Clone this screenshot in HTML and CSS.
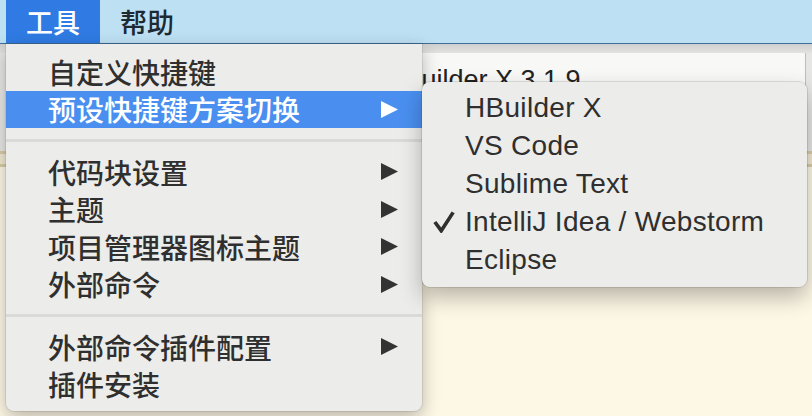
FILE: index.html
```html
<!DOCTYPE html>
<html lang="zh-CN">
<head>
<meta charset="utf-8">
<title>工具菜单</title>
<link rel="stylesheet" href="styles.css">
</head>
<body>
<div class="menubar">
  <div class="mb-item active">工具</div>
  <div class="mb-item">帮助</div>
</div>
<div class="workspace">
  <div class="tabstrip"></div>
  <div class="header">
    <div class="left-gutter"></div>
    <div class="title">HBuilder X 3.1.9</div>
  </div>
  <div class="rules"></div>
  <div class="paper"></div>

  <div class="menu main-menu">
    <div class="row"><span class="label">自定义快捷键</span></div>
    <div class="row hl"><span class="label">预设快捷键方案切换</span><svg class="arrow" viewBox="0 0 17 17"><polygon points="0,0 17,8.5 0,17"/></svg></div>
    <div class="sep"></div>
    <div class="row"><span class="label">代码块设置</span><svg class="arrow" viewBox="0 0 17 17"><polygon points="0,0 17,8.5 0,17"/></svg></div>
    <div class="row"><span class="label">主题</span><svg class="arrow" viewBox="0 0 17 17"><polygon points="0,0 17,8.5 0,17"/></svg></div>
    <div class="row"><span class="label">项目管理器图标主题</span><svg class="arrow" viewBox="0 0 17 17"><polygon points="0,0 17,8.5 0,17"/></svg></div>
    <div class="row"><span class="label">外部命令</span><svg class="arrow" viewBox="0 0 17 17"><polygon points="0,0 17,8.5 0,17"/></svg></div>
    <div class="sep"></div>
    <div class="row"><span class="label">外部命令插件配置</span><svg class="arrow" viewBox="0 0 17 17"><polygon points="0,0 17,8.5 0,17"/></svg></div>
    <div class="row"><span class="label">插件安装</span></div>
  </div>

  <div class="menu sub-menu">
    <div class="srow"><span class="check"></span><span class="label">HBuilder X</span></div>
    <div class="srow"><span class="check"></span><span class="label">VS Code</span></div>
    <div class="srow"><span class="check"></span><span class="label">Sublime Text</span></div>
    <div class="srow"><span class="check"><svg viewBox="0 0 24 24"><polyline points="2,12 9,21.5 22,1.5"/></svg></span><span class="label">IntelliJ Idea / Webstorm</span></div>
    <div class="srow"><span class="check"></span><span class="label">Eclipse</span></div>
  </div>
</div>
</body>
</html>
```

FILE: styles.css
```css
html, body {
  margin: 0;
  padding: 0;
}
body {
  width: 812px;
  height: 416px;
  overflow: hidden;
  background: #fdf7e5;
  font-family: "Liberation Sans", "Noto Sans CJK SC", sans-serif;
  color: #2e2e2e;
}

/* menu bar */
.menubar {
  height: 43px;
  display: flex;
  padding-left: 6px;
  background: #bde0f3;
  border-bottom: 1px solid #3f6d99;
}
.mb-item {
  padding: 0 20px;
  line-height: 43px;
  font-size: 27px;
  font-weight: 500;
  font-family: "Noto Sans CJK SC", sans-serif;
  color: #1d2a33;
}
.mb-item.active {
  background: #2f7be3;
  color: #ffffff;
}

/* workspace behind the menus */
.workspace {
  position: relative;
  height: 372px;
  display: flex;
  flex-direction: column;
}
.tabstrip {
  height: 9px;
  background: linear-gradient(#cfcfcf, #e2e2e0);
}
.header {
  height: 98px;
  display: flex;
  background: #f8f8f6;
  border-right: 6px solid #e6e6e4;
  box-shadow: inset -1px 0 0 #bdbdbb;
}
.left-gutter {
  width: 6px;
  background: #e7e7e5;
}
.title {
  padding: 14px 0 0 378px;
  font-size: 27px;
  line-height: 27px;
  color: #222;
}
.rules {
  height: 10px;
  border-top: 3px solid #d8cda6;
  border-bottom: 3px solid #d8cda6;
  background: #f1ead3;
}
.paper {
  flex: 1;
  background: #fdf7e5;
}

/* menus */
.menu {
  position: absolute;
  background: #ececea;
  font-size: 28px;
  color: #2f2f2f;
}
.main-menu {
  left: 6px;
  top: 0;
  width: 416px;
  padding: 9px 0 8px;
  border-radius: 0 0 8px 8px;
  box-shadow: 0 6px 18px rgba(0, 0, 0, 0.28), 0 0 0 1px rgba(0, 0, 0, 0.08);
  z-index: 2;
}
.row {
  height: 37.5px;
  display: flex;
  align-items: center;
  padding: 0 24px 0 42px;
  font-family: "Noto Sans CJK SC", sans-serif;
  font-size: 28px;
  font-weight: 500;
}
.row .label {
  flex: 1;
  line-height: 1;
}
.row.hl {
  background: #4a8ff0;
  color: #ffffff;
}
.arrow {
  width: 17px;
  height: 17px;
  fill: #333333;
}
.row.hl .arrow {
  fill: #ffffff;
}
.sep {
  height: 3px;
  margin: 11px 0;
  background: #dadad8;
}

.sub-menu {
  left: 422px;
  top: 38px;
  width: 385px;
  padding: 7px 0 8px;
  border-radius: 8px;
  box-shadow: 0 10px 22px rgba(0, 0, 0, 0.28), 0 0 0 1px rgba(0, 0, 0, 0.1);
  z-index: 3;
}
.srow {
  height: 38px;
  display: flex;
  align-items: center;
  padding-left: 11px;
  letter-spacing: 0.3px;
}
.check {
  width: 32px;
  height: 24px;
  display: flex;
  align-items: center;
}
.check svg {
  width: 22px;
  height: 22px;
  fill: none;
  stroke: #2f2f2f;
  stroke-width: 4;
  stroke-linecap: butt;
  stroke-linejoin: miter;
}
```
